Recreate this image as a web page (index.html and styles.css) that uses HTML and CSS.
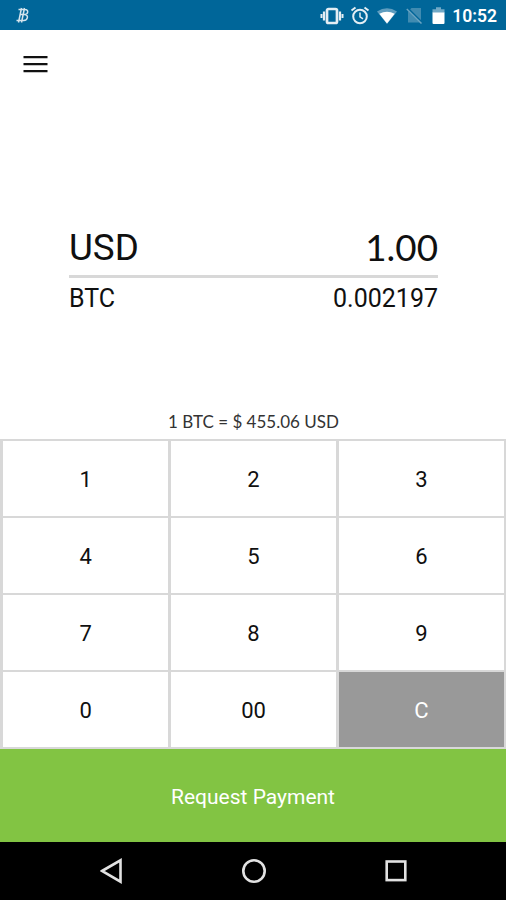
FILE: index.html
```html
<!DOCTYPE html>
<html lang="en">
<head>
<meta charset="utf-8">
<title>Request Payment</title>
<link rel="stylesheet" href="styles.css">
</head>
<body>
<div class="screen">
  <header class="status">
    <svg class="coin" width="16" height="18" viewBox="0 0 16 18" fill="none" stroke="#d5e4ed" stroke-width="1.500"><path d="M3.500 3.500h6.500c4 0 3.300 5-.5 5H5h4.500c4.500 0 3.500 6-.8 6H1.500M6.500 2 3.500 16.500M9.500 2 6.500 16.500"/></svg>
    <div class="status-icons">
      <svg class="vibrate" width="24" height="18" viewBox="0 0 24 18" fill="none" stroke="#e4eef4"><rect x="7" y="2" width="10" height="14" rx="1.500" stroke-width="2.700"/><path d="M4 4.500v9M20 4.500v9" stroke-width="2.200"/><path d="M1.500 7v4M22.500 7v4" stroke-width="2"/></svg>
      <svg class="alarm" width="20" height="19" viewBox="0 0 20 19" fill="none" stroke="#e4eef4"><circle cx="10" cy="10.500" r="6.800" stroke-width="2"/><path d="M10 6.500v4.300l3 2" stroke-width="1.500"/><path d="m1.500 4.500 4-3M18.500 4.500l-4-3" stroke-width="2"/></svg>
      <svg class="wifi" width="20" height="16" viewBox="0 0 20 16"><path d="M0 3.500Q10-3 20 3.500L10 16Z" fill="#5f9dbf"/><path d="M2.300 5.800Q10 1.500 17.700 5.800L10 15.500Z" fill="#fff"/></svg>
      <svg class="nosim" width="18" height="17" viewBox="0 0 18 17"><path d="M5.500 1H15v14.500H2V4.500Z" fill="#408bb1"/><path d="m1 1 15.500 15.500" stroke="#006699" stroke-width="2.500"/><path d="M.800 2 15.500 16.500" stroke="#6ba4c2" stroke-width="1.500"/></svg>
      <svg class="battery" width="13" height="17" viewBox="0 0 13 17"><path d="M.500 2.200h3.500V.300h5v1.900h3.500V6H.500Z" fill="#72a9c6"/><path d="M.500 5.500h12V16a1 1 0 0 1-1 1h-10a1 1 0 0 1-1-1Z" fill="#fff"/></svg>
      <span class="clock">10:52</span>
    </div>
  </header>
  <main class="amounts">
    <button class="menu" aria-label="Menu"><svg width="25" height="18" viewBox="0 0 25 18"><path d="M.500 2.200h24M.500 9.200h24M.500 16.200h24"/></svg></button>
    <section class="conversion">
      <div class="row primary"><span>USD</span><span class="value">1.00</span></div>
      <div class="row secondary"><span>BTC</span><span>0.002197</span></div>
    </section>
    <p class="rate">1 BTC = $ 455.06 USD</p>
  </main>
  <section class="keypad">
    <button>1</button><button>2</button><button>3</button>
    <button>4</button><button>5</button><button>6</button>
    <button>7</button><button>8</button><button>9</button>
    <button>0</button><button>00</button><button class="clear">C</button>
  </section>
  <button class="request">Request Payment</button>
  <nav class="navbar">
    <svg width="24" height="26" viewBox="0 0 24 26"><path d="M2 13 20.500 2.300v21.400Z"/></svg>
    <svg width="26" height="26" viewBox="0 0 26 26"><circle cx="13" cy="13" r="10.700"/></svg>
    <svg width="24" height="26" viewBox="0 0 24 26"><rect x="2.700" y="3.500" width="18.600" height="18.600"/></svg>
  </nav>
</div>
</body>
</html>
```
FILE: styles.css
```css
* {
  box-sizing: border-box;
}

body {
  margin: 0;
  background: #fff;
  color: #101010;
  font-family: Roboto, "Liberation Sans", sans-serif;
}

button {
  margin: 0;
  padding: 0;
  border: 0;
  background: #fff;
  color: inherit;
  font: inherit;
}

svg {
  display: block;
  flex: none;
}

.screen {
  display: flex;
  flex-direction: column;
  width: 506px;
  height: 900px;
  overflow: hidden;
}

.status {
  display: flex;
  justify-content: space-between;
  flex: none;
  height: 30px;
  padding: 6px 9px 0 15px;
  background: #006699;
}

.status-icons {
  display: flex;
  align-items: center;
  height: 19px;
}

.alarm {
  margin-left: 6px;
}

.wifi {
  margin-left: 7px;
}

.nosim {
  margin-left: 9px;
}

.battery {
  margin-left: 8px;
}

.clock {
  margin-left: 7px;
  color: #fff;
  font-size: 17.500px;
  font-weight: 600;
  line-height: 20px;
}

.amounts {
  display: flex;
  flex-direction: column;
  flex: none;
  height: 408.500px;
}

.menu {
  width: 25px;
  height: 18px;
  margin: 25px 0 0 22.500px;
}

.menu svg {
  stroke: #111;
  stroke-width: 2.300;
}

.conversion {
  margin: 153px 68px 0 69px;
}

.row {
  display: flex;
  justify-content: space-between;
}

.primary {
  height: 52px;
  border-bottom: 3px solid #d8d8d8;
  font-size: 36.800px;
  line-height: 43px;
}

.value {
  font-family: Lato, sans-serif;
}

.secondary {
  font-size: 25px;
  line-height: 42px;
}

.rate {
  margin: auto 0 5px;
  padding-left: 1px;
  color: #333;
  font-family: Lato, sans-serif;
  font-size: 17px;
  line-height: 24px;
  text-align: center;
}

.keypad {
  display: grid;
  grid-template-columns: repeat(3, 1fr);
  grid-template-rows: repeat(4, 1fr);
  gap: 2.500px;
  flex: none;
  height: 310.500px;
  padding: 2.500px 2px 2.500px 3px;
  background: #d8d8d8;
  font-size: 22px;
}

.keypad button {
  padding-top: 2px;
}

.keypad .clear {
  background: #999;
  color: #fff;
}

.request {
  flex: none;
  height: 93px;
  padding-top: 2px;
  background: #82c443;
  color: #fff;
  font-size: 21px;
}

.navbar {
  display: flex;
  justify-content: space-between;
  flex: 1;
  padding: 16px 98px 0 100px;
  background: #000;
}

.navbar svg {
  fill: none;
  stroke: #e2e2e2;
  stroke-width: 2.600;
}
```
